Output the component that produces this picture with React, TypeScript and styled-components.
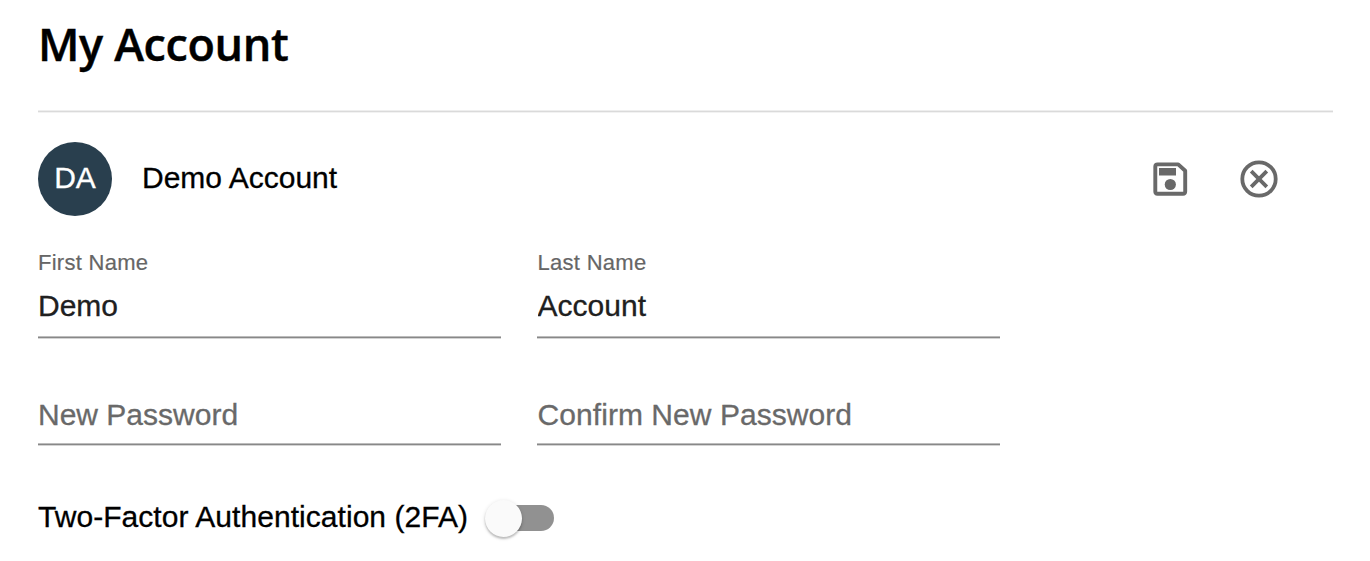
import React from "react";
import styled, { createGlobalStyle } from "styled-components";

const Global = createGlobalStyle`
  *{box-sizing:border-box}
  body{margin:0;background:#fff;font-family:"Liberation Sans",Helvetica,Arial,sans-serif;color:#000}
`;
const Page = styled.main`width:1370px;height:561px;padding:0 37px 0 38px;overflow:hidden;background:#fff;`;
const Header = styled.header`height:112px;`;
const Title = styled.h1`margin:0;padding-top:13px;font:600 45px/62px "Open Sans",sans-serif;white-space:nowrap;width:max-content;letter-spacing:-.36px;-webkit-text-stroke:.45px currentColor;`;
const Divider = styled.div`height:3px;margin-top:-2px;background:linear-gradient(#eeeeee 0 1px,#dadada 1px 2px,#f2f2f2 2px);`;
const Rule = styled.div`height:3px;background:linear-gradient(#bcbcbc 0 1px,#888888 1px 2px,#d4d4d4 2px);`;
const ProfileRow = styled.section`display:flex;align-items:center;margin-top:29px;height:74px;padding-right:52px;`;
const Avatar = styled.div`width:74px;height:74px;border-radius:50%;background:#293f4e;color:#fff;display:flex;align-items:center;justify-content:center;font-size:30px;line-height:36px;padding-bottom:3px;-webkit-text-stroke:.3px currentColor;`;
const Label = styled.span<{ $track?: number }>`font-size:30px;line-height:36px;white-space:nowrap;letter-spacing:${p => p.$track ?? 0}px;-webkit-text-stroke:.3px currentColor;`;
const Name = styled(Label)`margin:-2px 0 0 30px;flex:1;`;
const IconButton = styled.button`border:0;background:none;padding:0;width:44px;height:44px;color:#696969;margin-left:45px;display:block;svg{display:block}`;
const Fields = styled.form`display:grid;grid-template-columns:463px 463px;column-gap:36px;padding-top:33px;`;
const Field = styled.label<{ $height: number }>`display:flex;flex-direction:column;justify-content:space-between;height:${p => p.$height}px;`;
const FieldBody = styled.div<{ $inset?: number }>`display:flex;flex-direction:column;padding-left:${p => p.$inset ?? 0}px;`;
const Caption = styled.span`font-size:22px;line-height:28px;color:#666;white-space:nowrap;letter-spacing:.27px;-webkit-text-stroke:.2px currentColor;`;
const Input = styled.input<{ $track?: number; $top: number }>`font:30px/36px "Liberation Sans",Helvetica,Arial,sans-serif;height:36px;color:#202020;border:0;outline:0;background:none;padding:0;margin-top:${p => p.$top}px;letter-spacing:${p => p.$track ?? 0}px;-webkit-text-stroke:.3px currentColor;&::placeholder{color:#696969;opacity:1}`;
const SecurityRow = styled.section`display:flex;align-items:center;height:40px;margin-top:52px;`;
const SecurityLabel = styled(Label)`margin-top:-2px;`;
const Switch = styled.button`border:0;padding:0;margin-left:17px;width:69px;height:38px;background:none;display:flex;align-items:center;`;
const Track = styled.span`width:64px;height:26px;border-radius:13px;background:#919191;margin-left:5px;display:flex;align-items:center;`;
const Thumb = styled.span`flex:none;width:37px;height:37px;border-radius:50%;background:#fafafa;margin-left:-5px;box-shadow:0 2px 2px #0003,0 1px 4px #0002;`;

export default function App() {
  return <><Global /><Page>
    <Header><Title>My Account</Title></Header>
    <Divider />
    <ProfileRow>
      <Avatar>DA</Avatar><Name>Demo Account</Name>
      <IconButton aria-label="Save"><svg width="44" height="44" viewBox="0 0 44 44" fill="none" stroke="currentColor" strokeWidth="3.9"><path d="M9.5 7.4H30.2L37.2 13.8V34.6Q37.2 36.8 35 36.8H9.5Q7.3 36.8 7.3 34.6V9.6Q7.3 7.4 9.5 7.4Z" strokeLinejoin="round"/><path d="M11 11H28V18.5H11Z" fill="currentColor" stroke="none"/><circle cx="22.3" cy="27.5" r="5.6" fill="currentColor" stroke="none"/></svg></IconButton>
      <IconButton aria-label="Cancel"><svg width="44" height="44" viewBox="0 0 44 44" fill="none" stroke="currentColor" strokeWidth="3.8"><circle cx="22" cy="22" r="16.7"/><path d="M14.2 14.2L29.8 29.8M29.8 14.2L14.2 29.8"/></svg></IconButton>
    </ProfileRow>
    <Fields>
      <Field $height={90}><FieldBody><Caption>First Name</Caption><Input $top={11} defaultValue="Demo" /></FieldBody><Rule /></Field>
      <Field $height={90}><FieldBody $inset={0.6}><Caption>Last Name</Caption><Input $top={11} defaultValue="Account" /></FieldBody><Rule /></Field>
      <Field $height={107}><FieldBody><Input $top={58} type="password" placeholder="New Password" /></FieldBody><Rule /></Field>
      <Field $height={107}><FieldBody $inset={0.6}><Input $track={0.05} $top={58} type="password" placeholder="Confirm New Password" /></FieldBody><Rule /></Field>
    </Fields>
    <SecurityRow><SecurityLabel $track={0.05}>Two-Factor Authentication (2FA)</SecurityLabel><Switch role="switch" aria-checked="false" aria-label="Two-Factor Authentication"><Track><Thumb /></Track></Switch></SecurityRow>
  </Page></>;
}
